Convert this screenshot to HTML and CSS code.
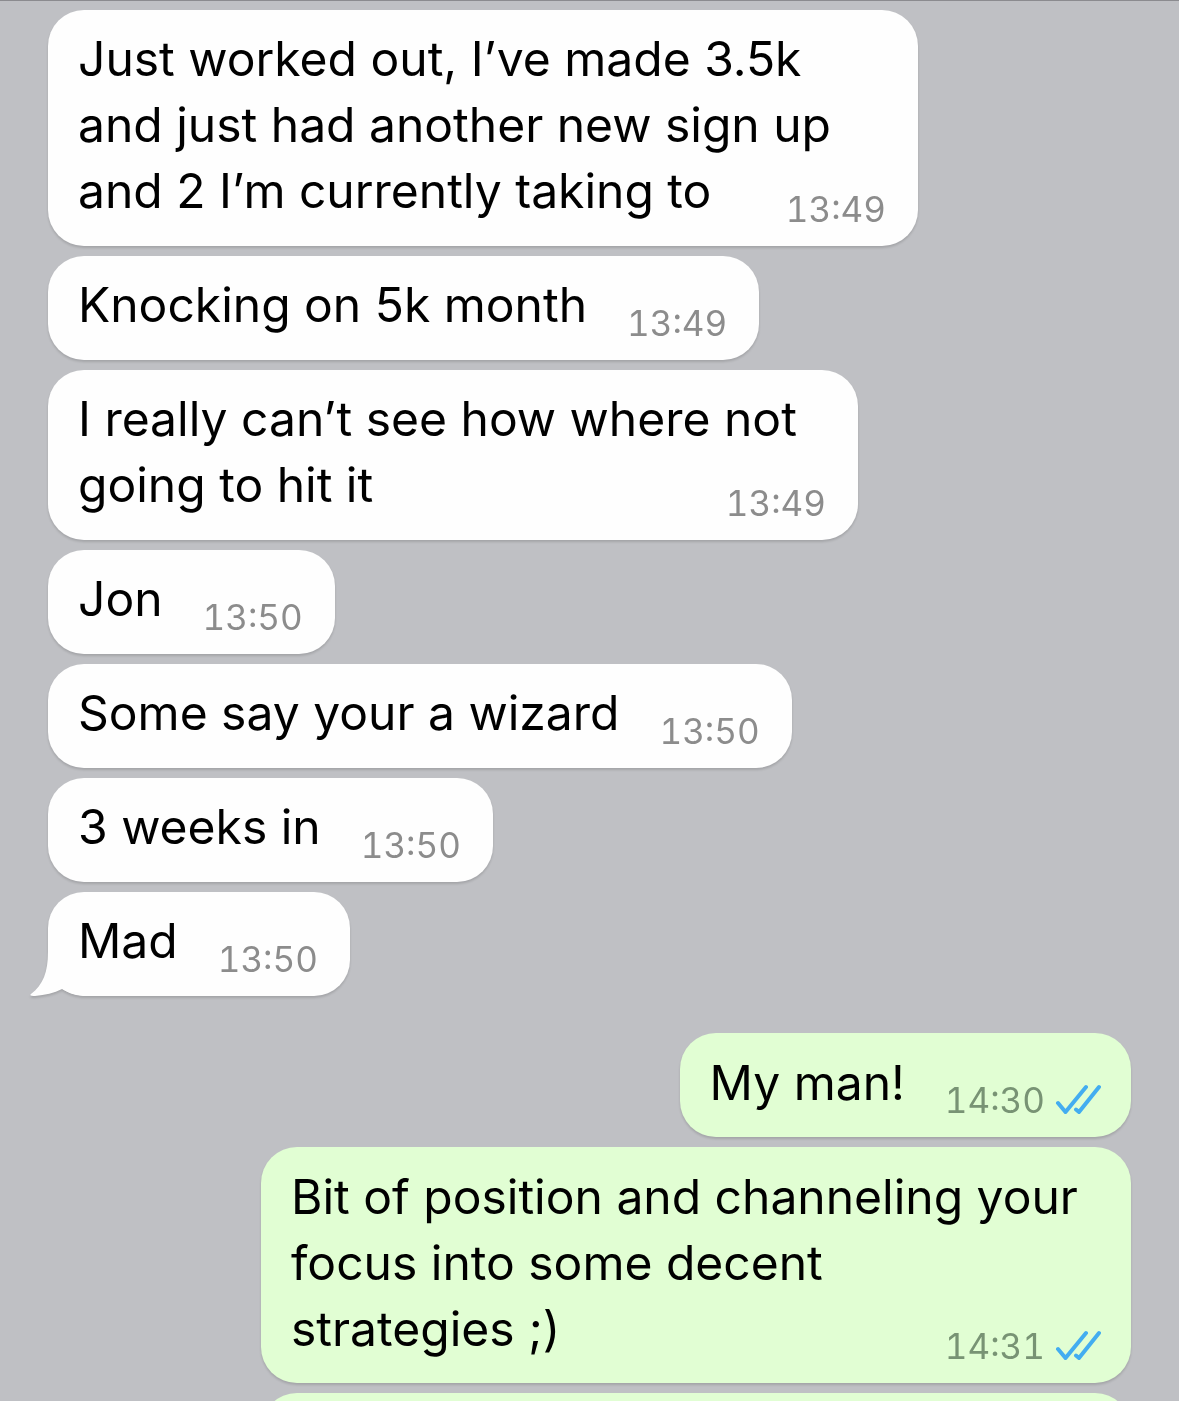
FILE: index.html
```html
<!DOCTYPE html>
<html lang="en">
<head>
  <meta charset="UTF-8" />
  <meta name="viewport" content="width=device-width, initial-scale=1.0"/>
  <title>Chat</title>
  <link rel="stylesheet" href="styles.css">
</head>
<body>
  <svg class="sprite" aria-hidden="true">
    <symbol id="ticks" viewBox="0 0 46 32">
      <path d="M3 19 L10.5 28 L31 3 M21 25.5 L24 28 L44 3" />
    </symbol>
  </svg>

  <main class="chat">
    <div class="bubble wide">
      <p>Just worked out, I’ve made 3.5k<br>and just had another new sign up<br>and 2 I’m currently taking to</p>
      <time>13:49</time>
    </div>
    <div class="bubble">
      <p>Knocking on 5k month</p>
      <time>13:49</time>
    </div>
    <div class="bubble medium">
      <p>I really can’t see how where not<br>going to hit it</p>
      <time>13:49</time>
    </div>
    <div class="bubble">
      <p>Jon</p>
      <time>13:50</time>
    </div>
    <div class="bubble">
      <p>Some say your a wizard</p>
      <time>13:50</time>
    </div>
    <div class="bubble">
      <p>3 weeks in</p>
      <time>13:50</time>
    </div>
    <div class="bubble last">
      <svg class="tail" viewBox="0 0 54 44" aria-hidden="true">
        <path d="M18 0 C18 20 13 33 1 42 C-1 44 2 44 5 44 C15 43 24 41 32 37 C39 41 46 43 54 44 L54 0 Z" />
      </svg>
      <p>Mad</p>
      <time>13:50</time>
    </div>

    <div class="bubble sent">
      <p>My man!</p>
      <time>14:30 <svg class="ticks" role="img" aria-label="Read"><use href="#ticks" /></svg></time>
    </div>
    <div class="bubble sent wide">
      <p>Bit of position and channeling your<br>focus into some decent<br>strategies ;)</p>
      <time>14:31 <svg class="ticks" role="img" aria-label="Read"><use href="#ticks" /></svg></time>
    </div>
    <div class="bubble sent wide"></div>
  </main>
</body>
</html>
```

FILE: styles.css
```css
:root {
  --bg: #bfc0c4;
  --received: #fefefe;
  --sent: #e1fed3;
  --tick: #43adf0;
}

* {
  box-sizing: border-box;
}

body {
  font-family: Inter, "Liberation Sans", sans-serif;
  background: var(--bg);
  color: #000;
  margin: 0;
}

.sprite {
  display: none;
}

.chat {
  display: flex;
  flex-direction: column;
  align-items: flex-start;
  gap: 10px;
  height: 100vh;
  padding: 9px 48px 0;
  border-top: 1px solid #8b8b8f;
  overflow: hidden;
}

.bubble {
  position: relative;
  display: flex;
  flex-shrink: 0;
  justify-content: space-between;
  align-items: flex-end;
  gap: 40px;
  min-height: 104px;
  max-width: 100%;
  padding: 16px 32px 22px 30px;
  border-radius: 36px;
  background: var(--received);
  filter: drop-shadow(0 2px 1px rgba(0, 0, 0, 0.14));
}

.bubble p {
  position: relative;
  margin: 0;
  font-size: 48px;
  line-height: 66px;
  white-space: nowrap;
}

.bubble time {
  display: flex;
  align-items: center;
  justify-content: flex-end;
  gap: 10px;
  color: #8c8c8c;
  font-size: 35px;
  font-variant-numeric: tabular-nums;
  line-height: 30px;
}

/* the time shares the last line of text */
.wide,
.medium {
  display: grid;
  grid-template-columns: 1fr;
}

.wide {
  width: 870px;
}

.medium {
  width: 810px;
}

.wide > *,
.medium > * {
  grid-area: 1 / 1;
}

.wide time,
.medium time {
  justify-self: end;
}

.last {
  margin-bottom: 27px;
}

.tail {
  position: absolute;
  left: -18px;
  bottom: 0;
  width: 54px;
  height: 44px;
  fill: var(--received);
}

.sent {
  align-self: flex-end;
  padding-right: 30px;
  padding-bottom: 21px;
  padding-top: 17px;
  background: var(--sent);
}

.sent time {
  color: #789374;
}

.ticks {
  width: 46px;
  height: 32px;
  fill: none;
  stroke: var(--tick);
  stroke-width: 4;
  stroke-linecap: round;
  stroke-linejoin: round;
}
```
